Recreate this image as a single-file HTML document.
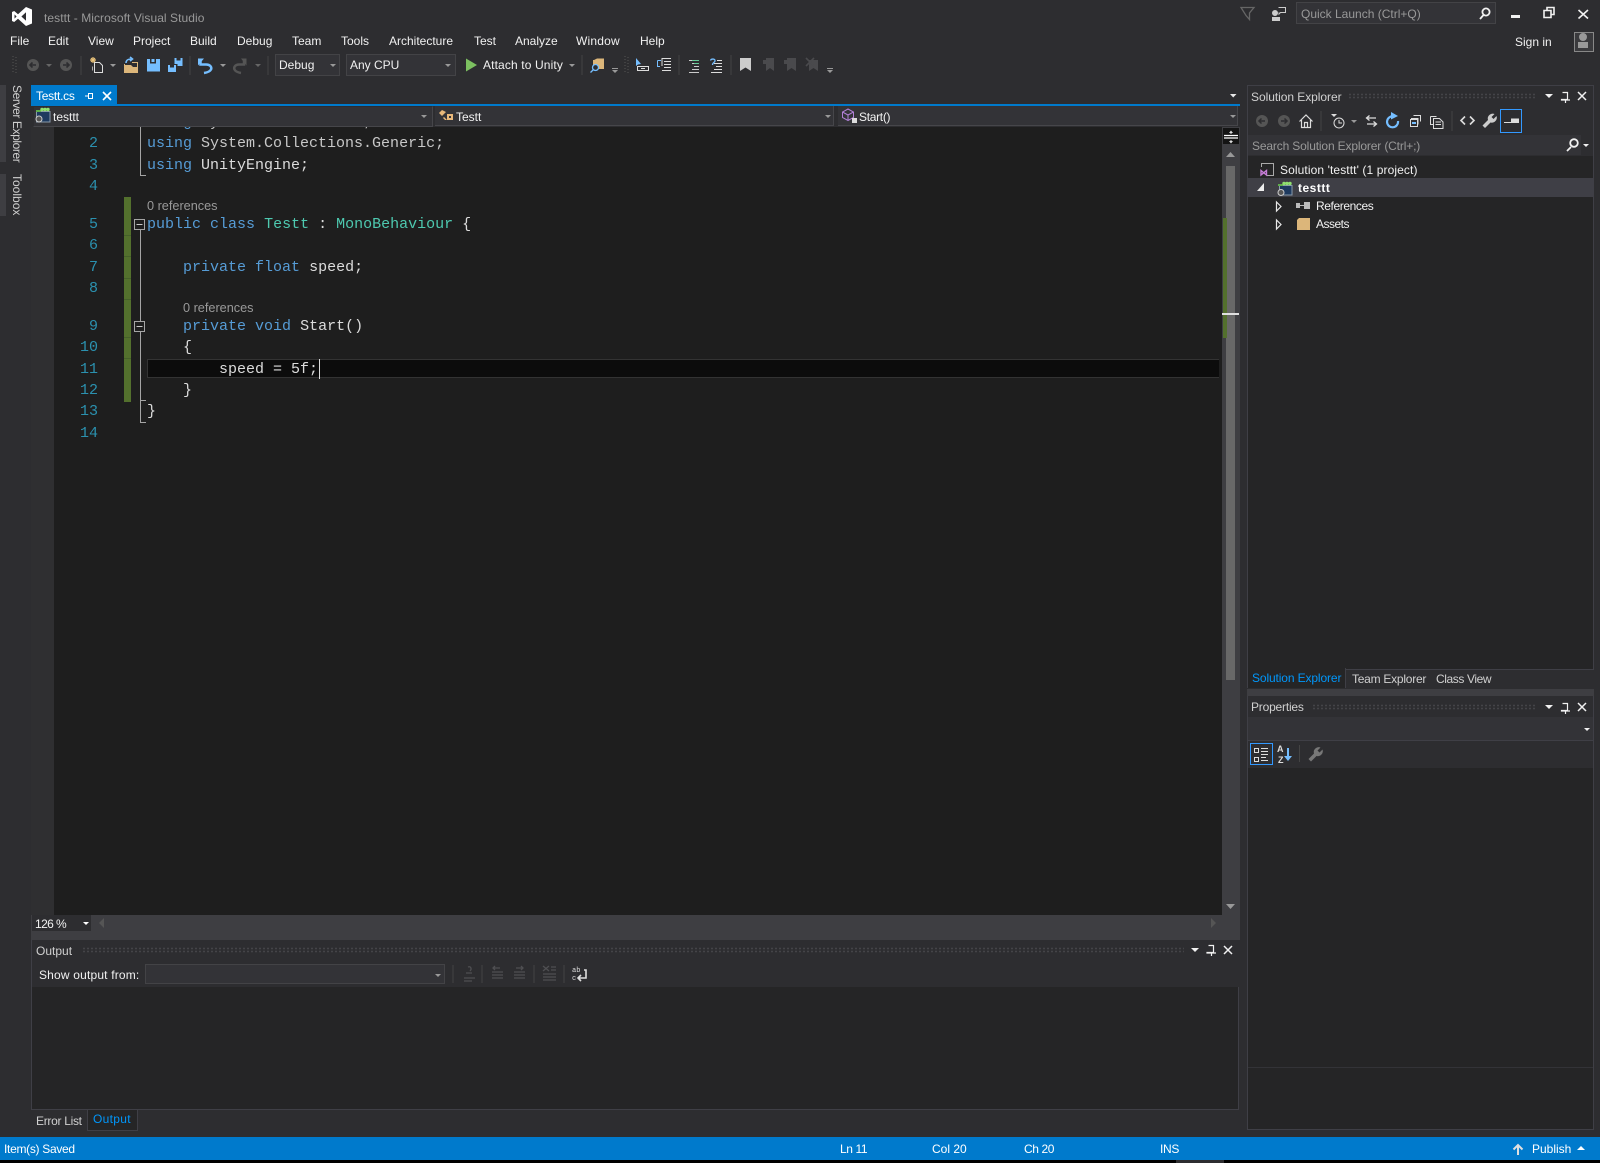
<!DOCTYPE html>
<html lang="en"><head><meta charset="utf-8"><title>testtt - Microsoft Visual Studio</title>
<style>
html,body{margin:0;padding:0;background:#2d2d30;}
#r{position:relative;width:1600px;height:1163px;overflow:hidden;background:#2d2d30;font:12px/16px "Liberation Sans",sans-serif;color:#f1f1f1;}
#r div{position:absolute;}
.t{white-space:pre;height:16px;}
.c{white-space:pre;font:15px/20px "Liberation Mono",monospace;color:#dcdcdc;height:20px;}
.k{color:#569cd6}.y{color:#4ec9b0}.n{color:#c8c8c8}
.l{font:15px/20px "Liberation Mono",monospace;color:#2b91af;width:50px;text-align:right;left:48px;height:20px;}
.rf{color:#999;white-space:pre;height:16px;font-size:12.7px;}
.d{background-image:radial-gradient(circle,#444448 0.8px,transparent 1px);background-size:4px 3px;height:6px;}
svg{position:absolute;left:0;top:0;}
</style></head><body><div id="r">

<!-- left strip -->
<div style="left:0;top:85px;width:6px;height:77px;background:#3e3e42"></div>
<div style="left:0;top:174px;width:6px;height:42px;background:#3e3e42"></div>
<div class="t" style="left:9px;top:85px;width:16px;height:80px;writing-mode:vertical-rl;color:#d0d0d0;letter-spacing:-.4px">Server Explorer</div>
<div class="t" style="left:9px;top:174px;width:16px;height:50px;writing-mode:vertical-rl;color:#d0d0d0">Toolbox</div>

<!-- title -->
<div class="t" style="left:44px;top:10px;color:#999;letter-spacing:.06px">testtt - Microsoft Visual Studio</div>
<div class="t" style="left:10px;top:33px">File</div>
<div class="t" style="left:48px;top:33px">Edit</div>
<div class="t" style="left:88px;top:33px">View</div>
<div class="t" style="left:133px;top:33px">Project</div>
<div class="t" style="left:190px;top:33px">Build</div>
<div class="t" style="left:237px;top:33px">Debug</div>
<div class="t" style="left:292px;top:33px">Team</div>
<div class="t" style="left:341px;top:33px">Tools</div>
<div class="t" style="left:389px;top:33px">Architecture</div>
<div class="t" style="left:474px;top:33px">Test</div>
<div class="t" style="left:515px;top:33px">Analyze</div>
<div class="t" style="left:576px;top:33px;letter-spacing:.2px">Window</div>
<div class="t" style="left:640px;top:33px">Help</div>

<div style="left:1296px;top:2px;width:198px;height:20px;background:#333337;border:1px solid #434346"></div>
<div class="t" style="left:1301px;top:6px;color:#999">Quick Launch (Ctrl+Q)</div>
<div class="t" style="left:1515px;top:34px">Sign in</div>
<div style="left:1574px;top:32px;width:18px;height:18px;border:1px solid #888;background:#3a3a3d"></div>

<!-- toolbar combos -->
<div style="left:275px;top:54px;width:63px;height:20px;background:#333337;border:1px solid #434346"></div>
<div class="t" style="left:279px;top:57px">Debug</div>
<div style="left:346px;top:54px;width:108px;height:20px;background:#333337;border:1px solid #434346"></div>
<div class="t" style="left:350px;top:57px">Any CPU</div>
<div class="t" style="left:483px;top:57px;letter-spacing:.13px">Attach to Unity</div>

<!-- doc tab -->
<div style="left:31px;top:85px;width:86px;height:19px;background:#007acc"></div>
<div class="t" style="left:36px;top:88px;color:#fff;letter-spacing:-.25px">Testt.cs</div>
<div style="left:31px;top:104px;width:1209px;height:2px;background:#007acc"></div>

<!-- nav bar -->
<div style="left:31px;top:106px;width:1209px;height:21px;background:#2d2d30"></div>
<div style="left:33px;top:106px;width:398px;height:19px;background:#333337;border:1px solid #2d2d30;border-bottom-color:#46464a;border-right-color:#46464a"></div>
<div style="left:435px;top:106px;width:398px;height:19px;background:#333337;border-bottom:1px solid #46464a;border-right:1px solid #46464a"></div>
<div style="left:838px;top:106px;width:399px;height:19px;background:#333337;border-bottom:1px solid #46464a;border-right:1px solid #46464a"></div>
<div class="t" style="left:53px;top:109px">testtt</div>
<div class="t" style="left:456px;top:109px">Testt</div>
<div class="t" style="left:859px;top:109px;letter-spacing:-.3px">Start()</div>

<!-- editor -->
<div style="left:31px;top:127px;width:1191px;height:788px;background:#1e1e1e;overflow:hidden">
  <div style="left:0;top:0;width:23px;height:788px;background:#2f2f31"></div>
  <div class="c" style="left:116px;top:-14px"><span class="k">using</span> <span class="n">System.Collections;</span></div>
</div>
<div style="left:147px;top:359px;width:1071px;height:17px;background:#0c0c0c;border:1px solid #333;border-right:0"></div>
<div style="left:319px;top:359px;width:1px;height:20px;background:#dcdcdc"></div>
<div style="left:124px;top:197px;width:7px;height:205px;background:#53702d"></div>

<div class="l" style="top:134px">2</div><div class="l" style="top:156px">3</div><div class="l" style="top:177px">4</div>
<div class="l" style="top:215px">5</div><div class="l" style="top:236px">6</div><div class="l" style="top:258px">7</div>
<div class="l" style="top:279px">8</div><div class="l" style="top:317px">9</div><div class="l" style="top:338px">10</div>
<div class="l" style="top:360px">11</div><div class="l" style="top:381px">12</div><div class="l" style="top:402px">13</div>
<div class="l" style="top:424px">14</div>

<div class="c" style="left:147px;top:134px"><span class="k">using</span> <span class="n">System.Collections.Generic;</span></div>
<div class="c" style="left:147px;top:156px"><span class="k">using</span> UnityEngine;</div>
<div class="rf" style="left:147px;top:198px">0 references</div>
<div class="c" style="left:147px;top:215px"><span class="k">public</span> <span class="k">class</span> <span class="y">Testt</span> : <span class="y">MonoBehaviour</span> {</div>
<div class="c" style="left:147px;top:258px">    <span class="k">private</span> <span class="k">float</span> speed;</div>
<div class="rf" style="left:183px;top:300px">0 references</div>
<div class="c" style="left:147px;top:317px">    <span class="k">private</span> <span class="k">void</span> Start()</div>
<div class="c" style="left:147px;top:338px">    {</div>
<div class="c" style="left:147px;top:360px">        speed = 5f;</div>
<div class="c" style="left:147px;top:381px">    }</div>
<div class="c" style="left:147px;top:402px">}</div>

<!-- scrollbars -->
<div style="left:1222px;top:127px;width:18px;height:813px;background:#3e3e42"></div>
<div style="left:1223px;top:128px;width:16px;height:16px;background:#141414"></div>
<div style="left:1226px;top:166px;width:9px;height:514px;background:#686868"></div>
<div style="left:1223px;top:218px;width:4px;height:120px;background:#53702d"></div>
<div style="left:1222px;top:313px;width:17px;height:2px;background:#e0e0e0"></div>
<div style="left:31px;top:915px;width:1191px;height:25px;background:#3e3e42"></div>
<div style="left:32px;top:915px;width:59px;height:16px;background:#2d2d30"></div>
<div class="t" style="left:35px;top:916px;letter-spacing:-.6px">126 %</div>

<!-- output panel -->
<div style="left:31px;top:940px;width:1208px;height:170px;background:#252526;border-right:1px solid #3f3f46;border-bottom:1px solid #3f3f46;border-left:1px solid #3f3f46;box-sizing:border-box"></div>
<div style="left:32px;top:940px;width:1207px;height:47px;background:#2d2d30"></div>
<div class="t" style="left:36px;top:943px;color:#d0d0d0">Output</div>
<div class="d" style="left:82px;top:947px;width:1102px"></div>
<div class="t" style="left:39px;top:967px;letter-spacing:.18px">Show output from:</div>
<div style="left:145px;top:964px;width:298px;height:18px;background:#333337;border:1px solid #434346"></div>
<div class="t" style="left:36px;top:1113px;color:#d0d0d0;letter-spacing:-.3px">Error List</div>
<div style="left:87px;top:1110px;width:49px;height:20px;background:#252526;border:1px solid #3f3f46;border-top:0"></div>
<div class="t" style="left:93px;top:1111px;color:#0097fb;letter-spacing:.3px">Output</div>

<!-- solution explorer -->
<div style="left:1247px;top:85px;width:345px;height:583px;background:#252526;border:1px solid #3f3f46"></div>
<div style="left:1248px;top:86px;width:345px;height:70px;background:#2d2d30"></div>
<div class="t" style="left:1251px;top:89px;color:#d0d0d0;letter-spacing:-.05px">Solution Explorer</div>
<div class="d" style="left:1348px;top:93px;width:189px"></div>
<div style="left:1248px;top:135px;width:333px;height:20px;background:#333337"></div>
<div class="t" style="left:1252px;top:138px;color:#999;letter-spacing:-.15px">Search Solution Explorer (Ctrl+;)</div>
<div style="left:1500px;top:109px;width:20px;height:22px;border:1px solid #3399ff;background:#2d2d30"></div>
<div style="left:1248px;top:178px;width:345px;height:19px;background:#3f3f46"></div>
<div class="t" style="left:1280px;top:162px;letter-spacing:.1px">Solution 'testtt' (1 project)</div>
<div class="t" style="left:1298px;top:180px;font-weight:bold;color:#fff;letter-spacing:.5px">testtt</div>
<div class="t" style="left:1316px;top:198px;letter-spacing:-.4px">References</div>
<div class="t" style="left:1316px;top:216px;letter-spacing:-.5px">Assets</div>

<!-- tabs -->
<div style="left:1247px;top:668px;width:99px;height:20px;background:#252526;border-left:1px solid #3f3f46;border-right:1px solid #3f3f46;box-sizing:border-box"></div>
<div class="t" style="left:1252px;top:670px;color:#0097fb;letter-spacing:-.12px">Solution Explorer</div>
<div class="t" style="left:1352px;top:671px;color:#d0d0d0;letter-spacing:-.25px">Team Explorer</div>
<div class="t" style="left:1436px;top:671px;color:#d0d0d0;letter-spacing:-.4px">Class View</div>

<!-- properties -->
<div style="left:1247px;top:689px;width:347px;height:7px;background:#3e3e42"></div>
<div style="left:1247px;top:696px;width:345px;height:433px;background:#252526;border:1px solid #3f3f46;border-top:0"></div>
<div style="left:1248px;top:696px;width:345px;height:21px;background:#2d2d30"></div>
<div class="t" style="left:1251px;top:699px;color:#d0d0d0;letter-spacing:-.2px">Properties</div>
<div class="d" style="left:1312px;top:704px;width:225px"></div>
<div style="left:1248px;top:717px;width:345px;height:24px;background:#333337;border-bottom:1px solid #3f3f46;box-sizing:border-box"></div>
<div style="left:1248px;top:741px;width:345px;height:27px;background:#2d2d30"></div>
<div style="left:1250px;top:743px;width:21px;height:20px;border:1px solid #3399ff"></div>
<div style="left:1248px;top:1067px;width:345px;height:1px;background:#333337"></div>

<!-- status -->
<div style="left:0;top:1137px;width:1600px;height:23px;background:#007acc"></div>
<div style="left:0;top:1160px;width:1600px;height:3px;background:#000"></div>
<div style="left:1176px;top:1160px;width:48px;height:3px;background:#2d2d30"></div>
<div class="t" style="left:4px;top:1141px;color:#fff;letter-spacing:-.3px">Item(s) Saved</div>
<div class="t" style="left:840px;top:1141px;color:#fff;letter-spacing:-.4px">Ln 11</div>
<div class="t" style="left:932px;top:1141px;color:#fff">Col 20</div>
<div class="t" style="left:1024px;top:1141px;color:#fff;letter-spacing:-.4px">Ch 20</div>
<div class="t" style="left:1160px;top:1141px;color:#fff;letter-spacing:-.3px">INS</div>
<div class="t" style="left:1532px;top:1141px;color:#fff">Publish</div>

<!-- icons overlay -->
<svg width="1600" height="1163" viewBox="0 0 1600 1163" fill="none">
<!-- VS logo -->
<path fill="#fff" fill-rule="evenodd" d="M26 7L32 9.500V23.500L26 26L18 18.700L14.200 22L12 21V12L14.200 11L18 14.300ZM26 12.300L21.400 16.500L26 20.700ZM14.500 14.400V18.600L16.600 16.500Z"/>

<!-- toolbar -->
<g fill="#555"><circle cx="33" cy="65" r="6"/><circle cx="66" cy="65" r="6"/></g>
<g stroke="#2d2d30" stroke-width="1.600"><path d="M36 65H30M32.500 62.500L30 65L32.500 67.500"/><path d="M63 65H69M66.500 62.500L69 65L66.500 67.500"/></g>
<g fill="#666"><path d="M46 64H52L49 67Z"/><path d="M220 64H226L223 67Z" fill="#999"/><path d="M255 64H261L258 67Z"/></g>
<path fill="#999" d="M110 64H116L113 67Z"/>
<path stroke="#444" d="M81 56V75M190 56V75M268 56V75M582 55V75M679 55V75M731 55V75"/>
<path stroke="#555" stroke-dasharray="1 2" stroke-width="1" d="M13 56V74M16 57V75M625 56V74M628 57V75"/>
<!-- new project -->
<path stroke="#ddd" d="M94.500 62.500H99.500L102.500 65.500V72.500H94.500Z"/><path stroke="#aaa" d="M92.500 66.500V70.500"/>
<path stroke="#e8c27a" stroke-width="1.200" d="M93 57V63M90 60H96M91 58L95 62M95 58L91 62"/>
<!-- open -->
<path fill="#dcb67a" d="M124 65H131L133 67H137.500V72H124Z"/><path stroke="#dcb67a" d="M124.500 64V72.500H137.500V62.500H132"/>
<path stroke="#75beff" stroke-width="1.600" d="M126 63C126 60 128 59 132 59M130 57L132.500 59L130 61"/>
<!-- save -->
<path fill="#75beff" fill-rule="evenodd" d="M147 59H160V71.500H147ZM150 59V63.500H156V59H154.500V62H151.500V59Z"/>
<path fill="#75beff" fill-rule="evenodd" d="M168 65H176V72H168ZM170 65V67.500H174V65ZM174.500 58H182.500V66H177.500V64H174.500ZM176.500 58V60.500H180.500V58Z"/>
<!-- undo/redo -->
<path stroke="#75beff" stroke-width="2.500" d="M200.500 60V64.500H206C210.500 64.500 212 67.500 211 69.500C210 71.500 207 72.500 204 73"/><path fill="#75beff" d="M198 58.500H204L198 65.500Z"/>
<path stroke="#555" stroke-width="2.500" d="M244 60V64.500H239C235 64.500 233.500 67.500 234.500 69.500C235.500 71.500 238 72.500 241 73"/><path fill="#555" d="M246.500 58.500H241L246.500 65.500Z"/>
<!-- any cpu / debug arrows -->
<g fill="#999"><path d="M330 64H336L333 67Z"/><path d="M445 64H451L448 67Z"/><path d="M569 64H575L572 67Z"/></g>
<path fill="#7cc060" d="M466 58.500L477 65L466 71.500Z"/>
<!-- find in files -->
<path fill="#dcb67a" d="M594 60L597 58.500H604V69H597V65H593V60Z"/><circle cx="595.500" cy="67.500" r="3" stroke="#75beff" stroke-width="1.300" fill="#2d2d30"/><path stroke="#75beff" stroke-width="1.300" d="M593.500 69.500L590.500 72.500"/>
<path fill="#999" d="M612 70H618L615 73Z M612 68H618V69H612Z"/>
<path fill="#75beff" d="M636 58L636 66L638 64.500L641 64L636 58Z"/><path stroke="#ddd" d="M637.500 66.500H648.500V70.500H637.500ZM641 68.500H645"/>
<path stroke="#75beff" d="M657.500 60.500H661M657.500 60.500V66.500H660"/><path stroke="#ddd" d="M662 58.500H671M664 61.500H671M664 64.500H671M664 67.500H671M662 70.500H671"/><path stroke="#ddd" d="M662 58V66" />
<path stroke="#ddd" d="M689 60.500H699M692 63.500H699M694 66.500H699M692 69.500H699M689 72.500H699" opacity=".9"/>
<path stroke="#4ec98a" d="M692 60.500H699M694 63.500H699" opacity=".8"/>
<path stroke="#ddd" d="M714 63.500H722M716 66.500H722M714 69.500H722M711 72.500H722M717 60.500H722"/><path stroke="#75beff" stroke-width="1.300" d="M710.500 60.500C711 58.500 715.500 58.500 715 61C714.800 62.500 712.500 62.500 712.500 65"/>
<!-- bookmarks -->
<path fill="#ccc" d="M740 58H751V71L745.500 67.500L740 71Z"/>
<g fill="#4a4a4d"><path d="M766 58H774V71L770 68L766 71V64H763V60H766Z"/><path d="M787 58H796V71L791.500 68L787 71V64H784V60H787Z"/><path d="M809 60H818V71L813.500 68L809 71Z"/></g>
<path stroke="#4a4a4d" stroke-width="1.600" d="M806 58L814 66M814 58L806 66"/>
<path fill="#999" d="M827 70H833L830 73Z M827 68H833V69H827Z"/>

<!-- titlebar right -->
<path stroke="#666" stroke-width="1.300" d="M1241 7.500H1254L1249.500 13V19.500L1246 15.500Z"/>
<path fill="#ccc" d="M1272 13a3 3 0 1 1 6 0a3 3 0 1 1-6 0ZM1272 17H1280V21H1272Z"/><path stroke="#ccc" d="M1278.500 7.500H1285.500V12.500H1280.500L1279 14V12.500"/>
<g stroke="#f1f1f1" stroke-width="1.800"><circle cx="1486" cy="12" r="3.600"/><path d="M1483.500 15L1480 19"/></g>
<path fill="#f1f1f1" d="M1511 15H1520V18H1511Z"/>
<path stroke="#f1f1f1" stroke-width="1.600" d="M1544 10.500H1551V17.500H1544ZM1547 10V7.500H1554V14.500H1551"/>
<path stroke="#f1f1f1" stroke-width="1.600" d="M1578.500 10L1588 18.500M1588 10L1578.500 18.500"/>
<path fill="#999" d="M1579 37a3.500 3.500 0 1 1 8 0a3.500 3.500 0 1 1-8 0ZM1578 42H1588V48H1578Z"/>

<!-- doc tab -->
<path stroke="#fff" d="M85 96H88M88.500 93.500H92.500V98.500H88.500Z"/>
<path stroke="#fff" stroke-width="1.600" d="M103 92L111 100M111 92L103 100"/>
<path fill="#e8e8e8" d="M1230 94H1236.500L1233.200 97.500Z"/>

<!-- nav icons -->
<path fill="#1e3a5f" stroke="#8899aa" d="M36.500 111.500H50V122H36.500Z"/><path fill="#5fae4a" d="M36 110H41V112H36Z"/>
<g fill="#8fe06f"><circle cx="42" cy="109.500" r="1.700"/><circle cx="45" cy="109.500" r="1.700"/><circle cx="48" cy="109.500" r="1.700"/></g>
<circle cx="39" cy="119" r="3" fill="#555" stroke="#ccc"/>
<g fill="#e8b87a"><path d="M442 110L446 112L442 116L439 113Z"/><path d="M447 114H453V120H447Z"/><path d="M444 117L447 120H445L443 118Z"/></g>
<path fill="#333337" d="M449 116H451V118H449Z"/>
<path stroke="#b180d7" fill="none" d="M848 109L853.500 112V117.500L848 120.500L842.500 117.500V112ZM842.500 112L848 115L853.500 112M848 115V120.500"/>
<path fill="#ddd" d="M852 118H857V123H852Z"/>
<g fill="#999"><path d="M421 115H427L424 118Z"/><path d="M825 115H831L828 118Z"/><path d="M1230 115H1236L1233 118Z"/></g>

<!-- outlining -->
<g stroke="#a5a5a5" stroke-width="1">
<path d="M140.500 127V175.500H146"/>
<path d="M140.500 230V321M140.500 332V400.500H146"/>
<path d="M140.500 400.500V422.500H146"/>
</g>
<g stroke="#a5a5a5" fill="#1e1e1e"><rect x="134.500" y="219.500" width="10" height="10"/><rect x="134.500" y="321.500" width="10" height="10"/></g>
<path stroke="#c8c8c8" d="M136.500 224.500H142.500M136.500 326.500H142.500"/>
<!-- green ticks -->
<path stroke="#45602a" d="M124 235.500H131M124 256.500H131M124 278.500H131M124 299.500H131M124 337.500H131M124 358.500H131"/>

<!-- scrollbar -->
<path stroke="#fff" stroke-width="1.200" d="M1224 135.500H1238M1224 138H1238"/>
<path stroke="#ddd" d="M1231 131V134M1231 140V143"/><path fill="#ddd" d="M1229 133H1233L1231 130.500ZM1229 141H1233L1231 143.500Z"/>
<path fill="#999" d="M1226 157L1230.500 152L1235 157Z"/>
<path fill="#999" d="M1226 904H1235L1230.500 909Z"/>
<path fill="#555" d="M104 918V928L99 923Z"/><path fill="#555" d="M1211 918V928L1216 923Z"/>
<path fill="#fff" d="M83 922H89L86 925Z"/>

<!-- panel controls -->
<g fill="#f1f1f1"><path d="M1191 948H1199L1195 952Z"/><path d="M1545 94H1553L1549 98Z"/><path d="M1545 705H1553L1549 709Z"/></g>
<g stroke="#f1f1f1" stroke-width="1.200" fill="none"><path d="M1208.500 945.500H1213.500V952.500H1207V953H1216M1211.500 953V956"/><path d="M1562.500 92.500H1567.500V99.500H1561.500V100H1570M1565.500 100V103"/><path d="M1562.500 703.500H1567.500V710.500H1561.500V711H1570M1565.500 711V714"/></g>
<g stroke="#f1f1f1" stroke-width="1.500"><path d="M1224 946L1232 954M1232 946L1224 954"/><path d="M1578 92L1586 100M1586 92L1578 100"/><path d="M1578 703L1586 711M1586 703L1578 711"/></g>

<!-- solution toolbar -->
<g fill="#555"><circle cx="1262" cy="121" r="6"/><circle cx="1284" cy="121" r="6"/></g>
<g stroke="#2d2d30" stroke-width="1.500"><path d="M1265 121H1259M1261.500 118.500L1259 121L1261.500 123.500"/><path d="M1281 121H1287M1284.500 118.500L1287 121L1284.500 123.500"/></g>
<path stroke="#ddd" stroke-width="1.200" d="M1299.500 121.500L1306 115L1312.500 121.500M1301.500 120V127.500H1310.500V120M1304.500 127.500V122.500H1307.500V127.500"/>
<path stroke="#444" d="M1321 111V131M1452 111V131M1299.500 745V762"/>
<path fill="#ddd" d="M1331 114H1337L1334 117Z"/><circle cx="1339" cy="123" r="5" stroke="#ddd"/><path stroke="#ddd" d="M1339 120V123H1342"/><path fill="#999" d="M1351 120H1357L1354 123Z"/>
<path stroke="#ddd" stroke-width="1.300" d="M1367 118H1376M1369.500 115.500L1366.500 118L1369.500 120.500M1367 124H1376M1373.500 121.500L1376.500 124L1373.500 126.500"/>
<path stroke="#75beff" stroke-width="2.200" d="M1394 116.500A5.500 5.500 0 1 0 1398 121"/><path fill="#75beff" d="M1391 112L1398 116L1391 119.500Z"/>
<path stroke="#ddd" fill="#2d2d30" d="M1413.500 115.500H1420.500V121.500M1411 118.500H1418V124.500M1410.500 119.500H1417.500V126.500H1410.500Z"/><path fill="#75beff" d="M1412 122H1416V124H1412Z"/>
<path stroke="#ddd" d="M1430.500 116.500H1436.500M1430.500 116.500V124.500H1433M1433.500 118.500H1439.500L1443 122V128.500H1433.500ZM1435.500 122H1441M1435.500 124.500H1441"/>
<path stroke="#ddd" stroke-width="1.600" d="M1465 116.500L1461 120.500L1465 124.500M1470 116.500L1474 120.500L1470 124.500"/>
<path fill="#ccc" d="M1490 114.500a5 5 0 0 1 4.500-0.500L1491.500 117L1493.500 119L1496.500 116a5 5 0 0 1-6 6.500L1485 128L1482.500 125.500L1488 120a5 5 0 0 1 2-5.500Z"/>
<path fill="#ddd" d="M1511 118.500H1519V122H1511Z"/><path stroke="#ddd" d="M1504 122.500H1519"/>
<!-- search icons -->
<g stroke="#f1f1f1" stroke-width="1.800"><circle cx="1574" cy="143" r="3.800"/><path d="M1571 147L1567 151"/></g>
<path fill="#f1f1f1" d="M1583 144H1589L1586 147Z"/>
<!-- tree -->
<path stroke="#aaa" d="M1261.500 167V163.500H1273.500V175.500H1267"/><path stroke="#c77dd8" stroke-width="1.400" d="M1261 170.500L1266.500 175L1266.500 170.500L1261 175Z"/>
<path fill="#eee" d="M1264 183V191H1257Z"/>
<path fill="#1e3a5f" stroke="#8899aa" d="M1279.500 185.500H1292V195H1279.500Z"/><path fill="#5fae4a" d="M1278 184H1283V186H1278Z"/>
<g fill="#8fe06f"><circle cx="1284" cy="183.500" r="1.700"/><circle cx="1287" cy="183.500" r="1.700"/><circle cx="1290" cy="183.500" r="1.700"/></g>
<circle cx="1281" cy="192.500" r="3" fill="#555" stroke="#ccc"/>
<path stroke="#e8e8e8" stroke-width="1.200" d="M1276.500 202L1281 206.500L1276.500 211Z M1276.500 220L1281 224.500L1276.500 229Z"/>
<path fill="#bbb" d="M1296 203H1300V208H1296Z M1304 202H1310V209H1304Z"/><path stroke="#bbb" d="M1300 205.500H1304"/>
<path fill="#dcb67a" d="M1297 220L1299 218H1310V230H1297Z"/>

<!-- properties toolbar -->
<path fill="#f1f1f1" d="M1584 728H1590L1587 731Z"/>
<path stroke="#ddd" d="M1254.500 748.500H1258.500V752.500H1254.500ZM1254.500 757.500H1258.500V761.500H1254.500ZM1261 748.500H1268M1261 751.500H1268M1261 754.500H1268M1261 757.500H1266M1261 760.500H1268"/>
<text x="1277" y="752" font-family="Liberation Sans" font-weight="bold" font-size="9" fill="#ddd">A</text>
<text x="1278" y="763" font-family="Liberation Sans" font-weight="bold" font-size="9" fill="#ddd">Z</text>
<path stroke="#75beff" stroke-width="2" d="M1288 748V758"/><path fill="#75beff" d="M1284 756H1292L1288 761Z"/>
<path fill="#777" d="M1316 748a5 5 0 0 1 4.500-0.500L1317.500 750.500L1319.500 752.500L1322.500 749.500a5 5 0 0 1-6 6.500L1311 761.500L1308.500 759L1314 753.500a5 5 0 0 1 2-5.500Z"/>

<!-- output toolbar -->
<path stroke="#444" d="M453 965V983M482 965V983M534 965V983M564 965V983"/>
<g stroke="#4f4f52" stroke-width="1.300"><path d="M464 978H475M464 981H472M468 967C471 966 472 969 470 971M466 973H472"/><path d="M492 972H503M492 975H503M492 978H503M500 968H493M495 966L493 968L495 970"/><path d="M514 972H525M514 975H525M514 978H525M516 968H523M521 966L523 968L521 970"/><path d="M543 966L549 971M549 966L543 971M551 967H556M551 970H556M543 974H556M543 977H556M543 980H556"/></g>
<text x="572" y="972" font-family="Liberation Mono" font-size="7" fill="#ddd">ab</text>
<text x="572" y="980" font-family="Liberation Mono" font-size="7" fill="#ddd">c</text>
<path stroke="#ddd" stroke-width="1.600" d="M584 970H586V978H578M581 975L578 978L581 981"/>
<path fill="#999" d="M435 974H441L438 977Z"/>

<!-- status -->
<path stroke="#e0e0e0" stroke-width="2" d="M1518 1155V1145M1513.500 1149.500L1518 1145L1522.500 1149.500"/>
<path fill="#fff" d="M1577 1150L1581 1146L1585 1150Z"/>
</svg>
</div></body></html>
